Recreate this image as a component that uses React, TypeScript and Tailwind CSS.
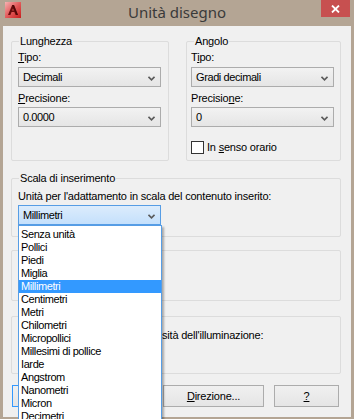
import type { ReactNode } from "react";

const UNITS = [
  "Senza unità",
  "Pollici",
  "Piedi",
  "Miglia",
  "Millimetri",
  "Centimetri",
  "Metri",
  "Chilometri",
  "Micropollici",
  "Millesimi di pollice",
  "Iarde",
  "Angstrom",
  "Nanometri",
  "Micron",
  "Decimetri",
];

function Chevron() {
  return (
    <svg width="7" height="5" viewBox="0 0 7 5" className="mt-[2px]">
      <path d="M0.5 0.8 L3.5 3.8 L6.5 0.8" fill="none" stroke="#5a5a5a" strokeWidth="1.6" />
    </svg>
  );
}

function Select({ value, focused }: { value: string; focused?: boolean }) {
  return (
    <div
      className={`w-[143px] h-[20px] border flex items-center justify-between pl-[4px] pr-[5px] ${
        focused
          ? "border-[#569de5] bg-gradient-to-b from-[#dcecfc] to-[#c4e0fc]"
          : "border-[#acacac] bg-gradient-to-b from-[#f2f2f2] to-[#e5e5e5]"
      }`}
    >
      <span className="tracking-[-0.4px]">{value}</span>
      <Chevron />
    </div>
  );
}

function Group({
  label,
  className,
  children,
}: {
  label?: string;
  className: string;
  children?: ReactNode;
}) {
  return (
    <div className={`relative border border-[#dcdcdc] rounded-[2px] ${className}`}>
      {label ? (
        <span className="absolute left-[7px] -top-[8px] px-[1px] bg-[#f0f0f0] leading-[14px]">
          {label}
        </span>
      ) : null}
      {children}
    </div>
  );
}

function Button({ children, className }: { children?: ReactNode; className: string }) {
  return (
    <div
      className={`h-[22px] border flex items-center justify-center bg-gradient-to-b from-[#f0f0f0] to-[#e5e5e5] ${className}`}
    >
      {children}
    </div>
  );
}

function AcadIcon() {
  return (
    <svg width="16" height="16" viewBox="0 0 16 16">
      <defs>
        <linearGradient id="acad" x1="0" y1="0" x2="1" y2="1">
          <stop offset="0" stopColor="#f6b3b3" />
          <stop offset="0.5" stopColor="#e25a5a" />
          <stop offset="1" stopColor="#c81e1e" />
        </linearGradient>
      </defs>
      <rect width="16" height="16" fill="url(#acad)" />
      <path d="M3 13 L7.2 3 L9 3 L13 13 L10.6 13 L9.4 10 L6.6 10 L5.4 13 Z M7.2 8.6 L8.8 8.6 L8 6.4 Z" fill="#6b0d0d" />
      <path d="M7.2 3 L9 3 L13 13 L11.6 13 Z" fill="#3d0505" opacity="0.6" />
    </svg>
  );
}

export default function App() {
  return (
    <div className="w-[354px] h-[419px] bg-[#b4a594] relative overflow-hidden font-['Liberation_Sans',Arial,sans-serif] text-[11px] tracking-[-0.2px] text-black">
      {/* title bar */}
      <div className="h-[26px] grid grid-cols-[1fr_auto_1fr] items-start">
        <div className="pl-[5px] pt-[2px]">
          <AcadIcon />
        </div>
        <div className="font-['Noto_Sans',sans-serif] text-[15px] tracking-normal leading-[24px] text-[#3a3a3a]">
          Unità disegno
        </div>
        <div className="flex justify-end pr-[4px]">
          <div className="w-[29px] h-[17px] bg-[#c75050] flex items-center justify-center">
            <svg width="9" height="8" viewBox="0 0 9 8">
              <path d="M1 0.5 L8 7.5 M8 0.5 L1 7.5" stroke="white" strokeWidth="1.8" />
            </svg>
          </div>
        </div>
      </div>

      {/* client area */}
      <div className="mx-[3px] h-[391px] bg-[#f0f0f0] pt-[15px] pl-[8px]">
        <div className="flex items-start gap-[17px]">
          <Group label="Lunghezza" className="w-[158px] h-[120px] pt-[8px] pl-[6px]">
            <div className="leading-[14px]">
              <u className="underline-offset-[1px]">T</u>ipo:
            </div>
            <div className="mt-[3px]">
              <Select value="Decimali" />
            </div>
            <div className="leading-[14px] mt-[4px]">
              <u className="underline-offset-[1px]">P</u>recisione:
            </div>
            <div className="mt-[2px]">
              <Select value="0.0000" />
            </div>
          </Group>

          <Group label="Angolo" className="w-[155px] h-[120px] pt-[8px] pl-[4px]">
            <div className="leading-[14px]">
              T<u className="underline-offset-[1px]">i</u>po:
            </div>
            <div className="mt-[3px]">
              <Select value="Gradi decimali" />
            </div>
            <div className="leading-[14px] mt-[4px]">
              Precisio<u className="underline-offset-[1px]">n</u>e:
            </div>
            <div className="mt-[2px]">
              <Select value="0" />
            </div>
            <div className="mt-[13px] flex items-center">
              <div className="w-[13px] h-[13px] border border-[#333333] bg-white" />
              <span className="ml-[3px] leading-[14px]">
                In <u className="underline-offset-[1px]">s</u>enso orario
              </span>
            </div>
          </Group>
        </div>

        <Group label="Scala di inserimento" className="mt-[17px] w-[330px] h-[59px] pt-[10px] pl-[6px]">
          <div className="leading-[14px]">Unità per l'adattamento in scala del contenuto inserito:</div>
          <div className="mt-[2px]">
            <Select value="Millimetri" focused />
          </div>
        </Group>

        {/* sample output group: its content sits behind the open list */}
        <Group className="mt-[13px] w-[330px] h-[51px]" />

        <Group className="mt-[15px] w-[330px] h-[58px] pt-[11px] pl-[6px]">
          <div className="leading-[14px] pl-[144px]">sità dell'illuminazione:</div>
        </Group>

        <div className="mt-[11px] flex pl-[1px]">
          <Button className="w-[65px] border-[#3399ff]" />
          <Button className="ml-[10px] w-[65px] border-[#acacac]" />
          <Button className="ml-[11px] w-[101px] border-[#acacac]">
            <span>
              <u className="underline-offset-[1px]">D</u>irezione...
            </span>
          </Button>
          <Button className="ml-[10px] w-[65px] border-[#acacac]">
            <u className="underline-offset-[1px]">?</u>
          </Button>
        </div>
      </div>

      {/* open dropdown list */}
      <div className="absolute left-[18px] top-[225px] w-[144px] h-[200px] bg-white border border-[#569de5] pt-[2px] tracking-[-0.4px] shadow-[2px_2px_2px_rgba(0,0,0,0.3)]">
        {UNITS.map((u) => (
          <div
            key={u}
            className={`h-[13px] leading-[13px] pl-[2px] ${
              u === "Millimetri" ? "bg-[#3399ff] text-white" : ""
            }`}
          >
            {u}
          </div>
        ))}
      </div>
    </div>
  );
}
